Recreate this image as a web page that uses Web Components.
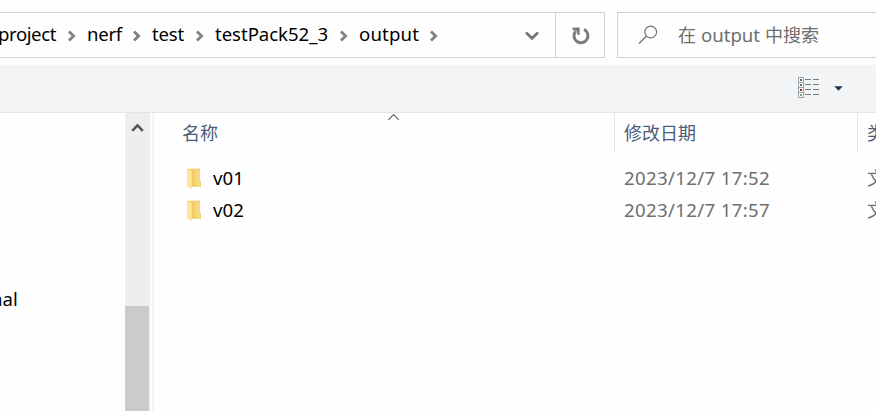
<!DOCTYPE html>
<html lang="zh-CN"><head><meta charset="utf-8"><title>output</title>
<style>
html,body{margin:0;height:100%;overflow:hidden;background:#fefefe}
body{font:18px/24px "Noto Sans","Noto Sans CJK SC",sans-serif;color:#000}
</style></head><body><explorer-window></explorer-window>
<script>
const define=(name,html,init)=>customElements.define(name,class extends HTMLElement{
  connectedCallback(){
    if(this.shadowRoot)return;
    this.attachShadow({mode:'open'}).innerHTML=html;
    if(init)init(this,this.shadowRoot);
  }
});

// Label whose letter spacing adapts to the width given in its "w" attribute.
define('fit-label',`<style>:host{display:block;flex:none;white-space:pre;height:24px;line-height:24px}span{display:inline-block}.latin{font-size:18.6px}</style><span></span>`,(el,root)=>{
  const s=root.querySelector('span'),w=+el.getAttribute('w');
  s.textContent=el.getAttribute('text');
  if(/^[\x20-\x7e]+$/.test(s.textContent))s.className='latin';
  el.style.width=w+'px';
  s.style.letterSpacing=((w-s.getBoundingClientRect().width)/s.textContent.length)+'px';
});

define('crumb-arrow',`<style>:host{display:block;flex:none;width:9px;height:12px}svg{display:block}</style>
<svg width="9" height="12" viewBox="0 0 9 12"><path d="M1 1.5 5.6 6 1 10.5" fill="none" stroke="#808080" stroke-width="2.8"/></svg>`);

define('address-bar',`<style>
:host{display:flex;box-sizing:border-box;width:605px;height:46px;border:solid #d2d2d2;border-width:1px 1px 1px 0;background:#fefefe}
.path{display:flex;width:555px;align-items:center;box-sizing:border-box;padding-bottom:1px}
fit-label{margin-bottom:1px}
crumb-arrow{margin-top:2px}
.drop{margin:3px 15px 0 auto}
.re{box-sizing:border-box;width:49px;border-left:1px solid #d2d2d2;display:flex;align-items:center;justify-content:center}
svg{display:block}
</style>
<div class="path">
<fit-label text="project" w="58" style="margin-left:-2px"></fit-label><crumb-arrow style="margin-left:12px"></crumb-arrow>
<fit-label text="nerf" w="35" style="margin-left:10px"></fit-label><crumb-arrow style="margin-left:11px"></crumb-arrow>
<fit-label text="test" w="32" style="margin-left:10px"></fit-label><crumb-arrow style="margin-left:12px"></crumb-arrow>
<fit-label text="testPack52_3" w="113" style="margin-left:10px"></fit-label><crumb-arrow style="margin-left:12px"></crumb-arrow>
<fit-label text="output" w="60" style="margin-left:10px"></fit-label><crumb-arrow style="margin-left:11px"></crumb-arrow>
<svg class="drop" width="16" height="10" viewBox="0 0 16 10"><path d="M2 1.5 8 7.3 14 1.5" fill="none" stroke="#777" stroke-width="2.8"/></svg>
</div>
<div class="re"><svg width="20" height="20" viewBox="0 0 20 20" style="margin:1px 0 0 2px"><path d="M13 3.4A7 7 0 1 1 4.6 5.2" fill="none" stroke="#7c7c7c" stroke-width="3"/><path d="M1.6 1.4H8.7V8.8H6.2V6L3.7 4.2H1.6Z" fill="#7c7c7c"/></svg></div>`);

define('search-box',`<style>
:host{display:flex;box-sizing:border-box;width:259px;height:46px;margin-left:12px;border:solid #d2d2d2;border-width:1px 0 1px 1px;color:#6e6e6e;padding-left:20px}
svg{display:block;margin-top:12px;margin-right:20px}.t{display:flex;padding-top:10px}
</style><svg width="20" height="20" viewBox="0 0 20 20"><circle cx="12.7" cy="7" r="5.9" fill="none" stroke="#747474" stroke-width="1.2"/><path d="M8.4 11.2 1 18.5" stroke="#747474" stroke-width="1.4"/></svg>
<div class="t"><fit-label text="在" w="18"></fit-label><fit-label text="output" w="59" style="margin-left:5px"></fit-label><fit-label text="中搜索" w="54" style="margin-left:5px"></fit-label></div>`);

define('tool-bar',`<style>
:host{display:flex;height:48px;box-sizing:border-box;background:#f3f4f6;border-bottom:1px solid #e4e5e7;justify-content:flex-end;padding:12px 33px 0 0}
svg{display:block}.a{margin:9px 0 0 14px}
</style><svg width="22" height="21" viewBox="0 0 22 21">
<path d="M.5.5H5.5V20.5H.5ZM.5 5.5H5.5M.5 10.5H5.5M.5 15.5H5.5" fill="#fff" stroke="#9aa1a6"/>
<path d="M7 2.5h6m2 0h6M7 7.5h6m2 0h6M7 12.5h6m2 0h6M7 17.5h6m2 0h6" stroke="#777b7f"/>
<path d="M2 2h2v2H2z" fill="#3f6e80"/><path d="M2 7h2v2H2z" fill="#587c5c"/><path d="M2 12h2v2H2z" fill="#9b2626"/><path d="M2 17h2v2H2z" fill="#70a878"/></svg>
<svg class="a" width="9" height="5" viewBox="0 0 9 5"><path d="M.3.2H8.7L4.5 4.7Z" fill="#1d3151"/></svg>`);

define('nav-pane',`<style>
:host{display:flex;width:152px;border-right:2px solid #f4f4f4;box-sizing:content-box}
.tree{width:125px;box-sizing:border-box;padding-top:174px;overflow:hidden}
.bar{width:25px;background:#eee}
.bar svg{display:block;margin:9px 0 0 6px}
.thumb{width:24px;height:105px;margin-top:173px;background:#cbcbcb}
</style><div class="tree"><fit-label text="nal" w="27" style="margin-left:-9px"></fit-label></div>
<div class="bar"><svg width="13" height="11" viewBox="0 0 13 11"><path d="M1.2 8.8 6.5 3.3 11.8 8.8" fill="none" stroke="#555" stroke-width="2.5"/></svg><div class="thumb"></div></div>`);

define('column-head',`<style>
:host{display:grid;grid-template-columns:461px 243px 18px;height:40px;color:#4a5d79}
div{position:relative;box-sizing:border-box;padding:8px 0 0 9px;border-right:1px solid #e2e3e5;overflow:hidden}
.name{padding-left:28px}.type{border:0}
svg{position:absolute;left:233px;top:0}
</style><div class="name"><svg width="13" height="8" viewBox="0 0 13 8"><path d="M1.4 6.9 6.6 1.6 11.8 6.9" fill="none" stroke="#666" stroke-width="1.2"/></svg><fit-label text="名称" w="36"></fit-label></div>
<div><fit-label text="修改日期" w="72"></fit-label></div><div class="type"><fit-label text="类型" w="36"></fit-label></div>`);

define('folder-icon',`<style>:host{display:block}svg{display:block}</style>
<svg width="15" height="22" viewBox="0 0 15 22"><path d="M.5 .8H12.9V12.4L13.9 14V18.8H4Z" fill="#f3cc68"/><path d="M8 .8H12.9V12.4L13.9 14V18.8H8Z" fill="#f8d67d"/><path d="M0 .8 4.8 3V21.2L0 18.6Z" fill="#fde49b"/></svg>`);

define('file-row',`<style>
:host{display:grid;grid-template-columns:26px 411px 243px 9px;height:32px;align-items:start;padding-left:33px}
fit-label{margin-top:4px;color:#6e6e6e}.n{color:#000}folder-icon{margin-top:6px}
.type{overflow:hidden}
</style><folder-icon></folder-icon><fit-label class="n"></fit-label><fit-label class="d"></fit-label><div class="type"><fit-label text="文件夹" w="54"></fit-label></div>`,(el,root)=>{
  for(const [cls,attr,w] of [['n','name',31],['d','date',146]]){
    const old=root.querySelector('.'+cls),cell=document.createElement('fit-label');
    cell.className=cls;cell.setAttribute('text',el.getAttribute(attr));cell.setAttribute('w',w);
    old.replaceWith(cell);
  }
});

define('file-list',`<style>:host{display:block;flex:1;min-width:0;overflow:hidden}.rows{padding-top:9px}</style>
<column-head></column-head><div class="rows"><file-row name="v01" date="2023/12/7 17:52"></file-row><file-row name="v02" date="2023/12/7 17:57"></file-row></div>`);

define('explorer-window',`<style>
:host{display:flex;flex-direction:column;width:876px;height:411px;overflow:hidden}
.top{display:flex;height:53px;padding-top:12px}
.main{display:flex;flex:1;min-height:0}
</style><div class="top"><address-bar></address-bar><search-box></search-box></div><tool-bar></tool-bar><div class="main"><nav-pane></nav-pane><file-list></file-list></div>`);
</script></body></html>
